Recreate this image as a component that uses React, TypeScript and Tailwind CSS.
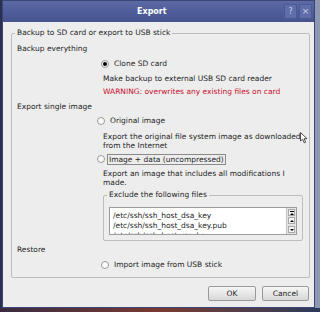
import type { ReactNode } from 'react'

const files = [
  '/etc/ssh/ssh_host_dsa_key',
  '/etc/ssh/ssh_host_dsa_key.pub',
  '/etc/ssh/ssh_host_rsa_key',
  '/etc/ssh/ssh_host_rsa_key.pub',
]

function Radio({ checked, label, className, focus }: { checked?: boolean; label: string; className?: string; focus?: boolean }) {
  return (
    <div className={`flex h-[10px] items-center ${className ?? ''}`}>
      <span className="flex h-[8px] w-[8px] items-center justify-center rounded-full border border-[#9a9a9a] bg-[#fafafa]">
        {checked && <span className="h-[4px] w-[4px] rounded-full bg-black" />}
      </span>
      <span
        className={
          focus
            ? 'ml-[2px] border border-[#8a8a8a] px-[1px] leading-[9px]'
            : 'ml-[5px] leading-[10px]'
        }
      >
        {label}
      </span>
    </div>
  )
}

function Group({ title, className, children }: { title: string; className?: string; children: ReactNode }) {
  return (
    <fieldset className={`rounded-[2px] border border-[#bdbdbd] ${className ?? ''}`}>
      <legend className="ml-[3px] px-[2px] leading-[10px]">{title}</legend>
      {children}
    </fieldset>
  )
}

function Cursor() {
  return (
    <svg className="absolute left-[300px] top-[132px]" width="10" height="12" viewBox="0 0 10 12">
      <path d="M0.5 0.5 L0.5 9 L2.6 7.2 L4.2 10.8 L5.6 10.2 L4.1 6.7 L7 6.7 Z" fill="#fff" stroke="#222" strokeWidth="0.8" strokeLinejoin="round" />
    </svg>
  )
}

export default function App() {
  return (
    <div className="relative flex h-[312px] w-[320px] flex-col overflow-hidden bg-[#8d99b3] font-['DejaVu_Sans',sans-serif] text-[7.5px] text-[#1e1e1e]">
      <div className="flex flex-1">
        <div className="w-[2px] bg-[#2b3050]" />
        {/* window */}
        <div className="flex w-[313px] flex-col border border-[#3b4677] bg-[#ededed]">
          <div className="flex h-[21px] items-center bg-gradient-to-b from-[#5b6aa6] to-[#45548f] pl-[134px] pr-[2px]">
            <span className="flex-1 text-[8px] font-bold text-white">Export</span>
            <span className="flex h-[15px] w-[13px] items-center justify-center rounded-[1px] border border-[#4a5a95] bg-[#5f6ea8] text-[8px] text-[#c9cfe6]">?</span>
            <span className="ml-[2px] flex h-[15px] w-[13px] items-center justify-center rounded-[1px] border border-[#4a5a95] bg-[#5f6ea8] text-[9px] text-[#c9cfe6]">×</span>
          </div>
          <div className="flex flex-1 flex-col pl-[8px] pr-[4px]">
            <Group title="Backup to SD card or export to USB stick" className="mt-[6px] pb-[7px]">
              <div className="mt-[6px] ml-[5px] leading-[10px]">Backup everything</div>
              <Radio checked label="Clone SD card" className="mt-[5px] ml-[89px]" />
              <div className="mt-[5px] ml-[91px] leading-[10px]">Make backup to external USB SD card reader</div>
              <div className="mt-[3px] ml-[91px] leading-[10px] text-[#c8102e]">WARNING: overwrites any existing files on card</div>
              <div className="mt-[5px] ml-[5px] leading-[10px]">Export single image</div>
              <Radio label="Original image" className="mt-[4px] ml-[85px]" />
              <div className="mt-[6px] ml-[91px] leading-[9px]">
                Export the original file system image as downloaded
                <br />
                from the Internet
              </div>
              <Radio label="Image + data (uncompressed)" focus className="mt-[4px] ml-[85px]" />
              <div className="mt-[6px] ml-[91px] leading-[8.5px]">
                Export an image that includes all modifications I
                <br />
                made.
              </div>
              <Group title="Exclude the following files" className="mt-[3px] ml-[91px] mr-[6px] pb-[5px]">
                <div className="mt-[7px] ml-[5px] mr-[5px] flex h-[28px] border border-[#9c9c9c] bg-white">
                  <div className="flex-1 overflow-hidden pl-[3px] pt-[3px] leading-[10px]">
                    {files.map((f) => (
                      <div key={f}>{f}</div>
                    ))}
                  </div>
                  <div className="flex w-[10px] flex-col gap-[1px] border-l border-[#c4c4c4] bg-[#e4e4e4] p-[1px]">
                    <span className="flex h-[7px] flex-col items-center justify-center border border-[#a8a8a8] bg-[#f4f4f4]">
                      <span className="h-[1px] w-[4px] bg-black" />
                      <span className="mt-[1px] h-0 w-0 border-x-[2px] border-b-[2px] border-x-transparent border-b-black" />
                    </span>
                    <span className="flex h-[7px] items-center justify-center border border-[#a8a8a8] bg-[#f4f4f4]">
                      <span className="h-0 w-0 border-x-[2px] border-b-[2px] border-x-transparent border-b-black" />
                    </span>
                    <span className="flex-1" />
                    <span className="flex h-[7px] items-center justify-center border border-[#a8a8a8] bg-[#f4f4f4]">
                      <span className="h-0 w-0 border-x-[2px] border-t-[2px] border-x-transparent border-t-black" />
                    </span>
                  </div>
                </div>
              </Group>
              <div className="mt-[4px] ml-[5px] leading-[10px]">Restore</div>
              <Radio label="Import image from USB stick" className="mt-[5px] ml-[89px]" />
            </Group>
            <div className="mt-[8px] flex justify-end gap-[6px] pr-[1px]">
              <button className="h-[15px] w-[48px] rounded-[2px] border border-[#9a9a9a] bg-gradient-to-b from-[#f6f6f6] to-[#d8d8d8] text-[7.5px] leading-[13px]">OK</button>
              <button className="h-[15px] w-[47px] rounded-[2px] border border-[#9a9a9a] bg-gradient-to-b from-[#f6f6f6] to-[#d8d8d8] text-[7.5px] leading-[13px]">Cancel</button>
            </div>
          </div>
        </div>
        <div className="flex-1 bg-[#8d99b3]" />
      </div>
      <div className="h-[4px] bg-gradient-to-r from-[#3a2a40] via-[#7a3a30] to-[#2a3a5a]" />
      <Cursor />
    </div>
  )
}
